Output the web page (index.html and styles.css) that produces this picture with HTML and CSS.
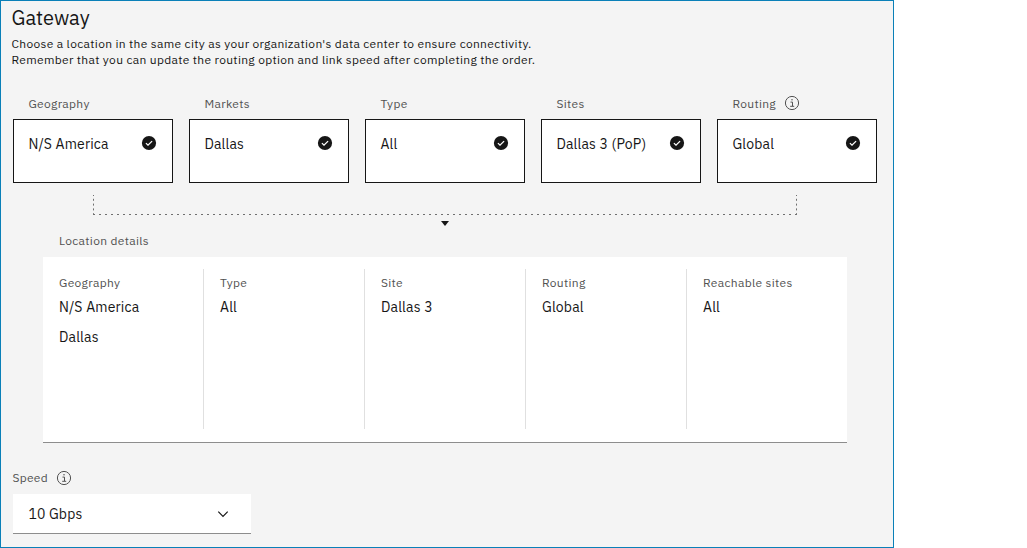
FILE: index.html
```html
<!DOCTYPE html>
<html lang="en">
<head>
<meta charset="utf-8">
<title>Gateway</title>
<link rel="stylesheet" href="styles.css">
</head>
<body>
<svg class="defs" aria-hidden="true">
  <symbol id="check" viewBox="0 0 16 16"><circle cx="8" cy="8" r="7.1" fill="#161616"/><path d="M4.9 8.1 7 10.1 11.1 6.1" fill="none" stroke="#fff" stroke-width="1.3"/></symbol>
  <symbol id="info" viewBox="0 0 16 16"><circle cx="8" cy="8" r="6.6" fill="none" stroke="#525252"/><path d="M6.5 7.1H8.5V11M6.2 11.3H10.2" fill="none" stroke="#525252"/><circle cx="8" cy="4.8" r=".75" fill="#525252"/></symbol>
</svg>
<main class="panel">
  <h1 class="title">Gateway</h1>
  <p class="intro">Choose a location in the same city as your organization's data center to ensure connectivity.<br>Remember that you can update the routing option and link speed after completing the order.</p>
  <section class="steps">
    <div class="step"><div class="label"><span class="caption">Geography</span></div><div class="tile"><span class="value">N/S America</span><svg class="icon"><use href="#check"/></svg></div></div>
    <div class="step"><div class="label"><span class="caption">Markets</span></div><div class="tile"><span class="value">Dallas</span><svg class="icon"><use href="#check"/></svg></div></div>
    <div class="step"><div class="label"><span class="caption">Type</span></div><div class="tile"><span class="value">All</span><svg class="icon"><use href="#check"/></svg></div></div>
    <div class="step"><div class="label"><span class="caption">Sites</span></div><div class="tile"><span class="value">Dallas 3 (PoP)</span><svg class="icon"><use href="#check"/></svg></div></div>
    <div class="step"><div class="label"><span class="caption">Routing</span><svg class="icon"><use href="#info"/></svg></div><div class="tile"><span class="value">Global</span><svg class="icon"><use href="#check"/></svg></div></div>
  </section>
  <svg class="connector" viewBox="0 0 704 32">
    <path d="M.5 0V20M703.5 0V20" stroke-dasharray="2 2.8" stroke-dashoffset="1"/>
    <path d="M0 19.5H704" stroke-dasharray="2 4"/>
    <path class="arrow" d="M348 26H356L352 31Z"/>
  </svg>
  <div class="label details-label">Location details</div>
  <section class="details">
    <div class="detail"><div class="label">Geography</div><div class="value">N/S America</div><div class="value">Dallas</div></div>
    <div class="detail"><div class="label">Type</div><div class="value">All</div></div>
    <div class="detail"><div class="label">Site</div><div class="value">Dallas 3</div></div>
    <div class="detail"><div class="label">Routing</div><div class="value">Global</div></div>
    <div class="detail"><div class="label">Reachable sites</div><div class="value">All</div></div>
  </section>
  <div class="label speed-label">Speed<svg class="icon"><use href="#info"/></svg></div>
  <div class="select"><span class="value">10 Gbps</span><svg class="chevron" viewBox="0 0 16 16"><path d="M3.3 5.7 8 10.4 12.7 5.7"/></svg></div>
</main>
</body>
</html>
```
FILE: styles.css
```css
* { box-sizing: border-box; }
body { margin: 0; background: #fff; color: #161616; font-family: "IBM Plex Sans", Roboto, sans-serif; }
.defs { position: absolute; width: 0; height: 0; }
.panel { width: 894px; height: 548px; border: 1px solid #0a80b8; background: #f4f4f4; padding: 4px 16px 0 11px; }
.title { margin: 0 0 0 -.5px; font-size: 20px; line-height: 26px; font-weight: 400; letter-spacing: 0; }
.intro { margin: 5px 0 0 -.5px; font-size: 12px; line-height: 16px; letter-spacing: .32px; white-space: nowrap; }
.steps { display: flex; gap: 16px; margin: 27px 0 0 1px; }
.step { width: 160px; }
.label { display: flex; align-items: center; gap: 8px; height: 16px; font-size: 12px; line-height: 16px; letter-spacing: .32px; color: #525252; }
.step .label { padding-left: 15.4px; margin-bottom: 8px; }
.caption { padding-top: 2px; }
.icon { display: block; width: 16px; height: 16px; flex: none; }
.tile { display: flex; justify-content: space-between; align-items: flex-start; height: 64px; padding: 15px 15px 0 14.4px; border: 1px solid #161616; background: #fff; }
.value { font-size: 14px; line-height: 18px; letter-spacing: .16px; white-space: nowrap; }
.connector { display: block; width: 704px; height: 32px; margin: 12px 0 0 81px; }
.connector path { fill: none; stroke: #6f6f6f; }
.connector .arrow { fill: #161616; stroke: none; }
.details-label { margin: 6px 0 8px 47px; }
.details { display: grid; grid-template-columns: repeat(5, 161px); width: 804px; height: 186px; margin-left: 31px; padding-top: 12px; border-bottom: 1px solid #8d8d8d; background: #fff; }
.detail { height: 160px; padding: 6px 0 0 16px; border-right: 1px solid #e0e0e0; }
.detail:last-child { width: 160px; border: 0; }
.detail .value { height: 22px; margin-top: 8px; }
.detail .label + .value { margin-top: 7px; }
.speed-label { margin: 27px 0 8px .4px; }
.select { display: flex; align-items: center; justify-content: space-between; width: 238px; height: 40px; margin-left: 1px; padding: 0 20px 0 15.4px; border-bottom: 1px solid #8d8d8d; background: #fff; }
.chevron { width: 16px; height: 16px; fill: none; stroke: #161616; stroke-width: 1.2; }
```
